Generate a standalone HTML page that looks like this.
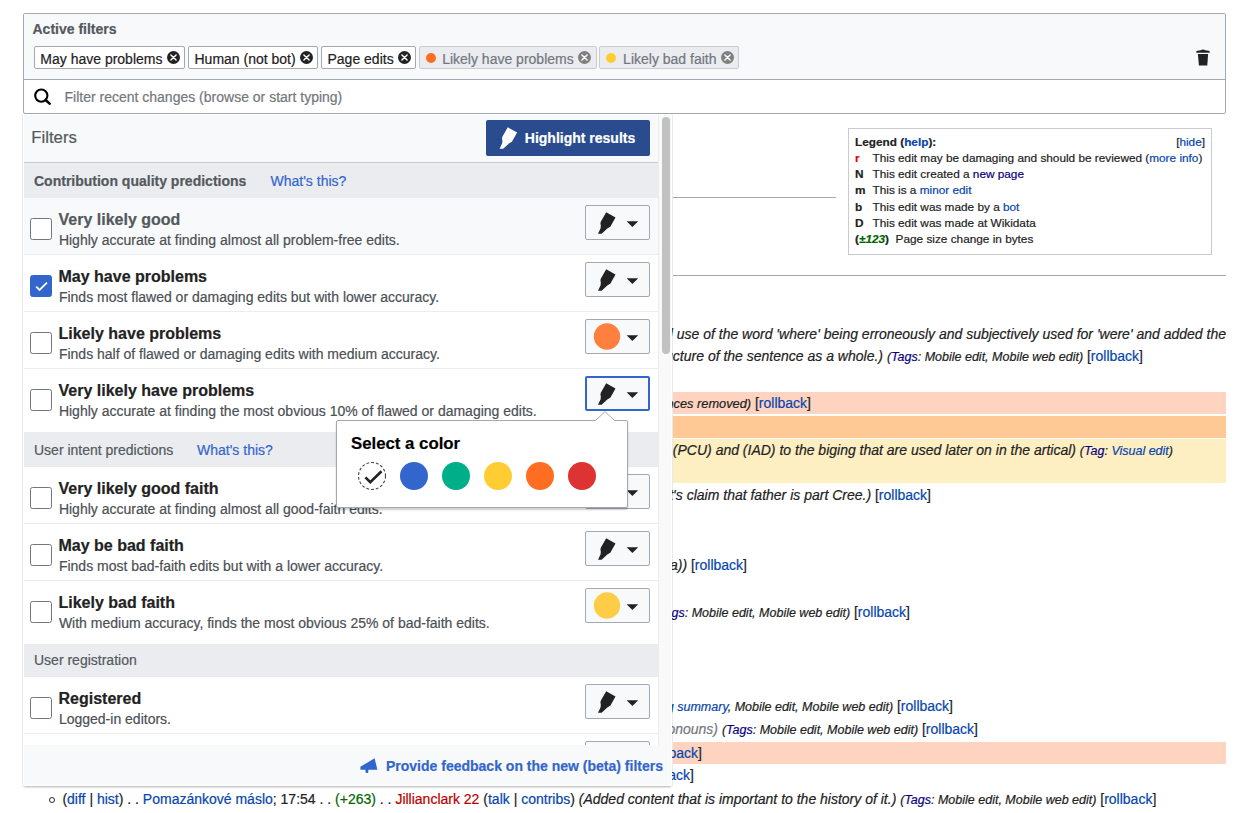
<!DOCTYPE html>
<html><head><meta charset="utf-8">
<style>
*{box-sizing:border-box;margin:0;padding:0}
html,body{width:1250px;height:813px;overflow:hidden;background:#fff}
body{position:relative;font-family:"Liberation Sans",sans-serif;color:#222;font-size:14px;-webkit-text-stroke:0.2px currentColor}
.a{position:absolute;white-space:nowrap;line-height:1}
.lk{color:#0645ad}
.vt{color:#0b0080}
.i{font-style:italic}
.b{font-weight:bold}
.tg{font-size:12.5px}
/* active filters */
#af{position:absolute;left:23px;top:13px;width:1203px;height:101px;border:1px solid #a2a9b1;border-radius:2px;background:#fff}
#afTop{position:absolute;left:0;top:0;right:0;height:66px;background:#f8f9fa;border-bottom:1px solid #a2a9b1}
.chip{position:absolute;top:32px;height:23px;border:1px solid #a2a9b1;border-radius:2px;background:#fff}
.chip.m{background:#eaecf0;border-color:#c8ccd1}
.chip .t{position:absolute;top:5.3px;font-size:14px;line-height:1}
.chip.m .t{color:#72777d}
.chip .x{position:absolute;top:4px;width:13px;height:13px}
.dot{position:absolute;top:6px;width:10px;height:10px;border-radius:50%}
/* panel */
#pn{position:absolute;left:23px;top:114px;width:649px;height:672px;background:#fff;border:1px solid #fff;border-radius:1px;box-shadow:0 2px 2px -1px rgba(0,0,0,0.3),-1px 0 1px 0 rgba(0,0,0,0.07),1px 0 1px 0 rgba(0,0,0,0.07);overflow:hidden}
.sec{position:absolute;left:0;width:634px;background:#eaecf0;color:#54595d}
.row{position:absolute;left:0;width:634px;background:#fff;border-bottom:1px solid #eaecf0}
.cb{position:absolute;left:6px;top:20px;width:22px;height:22px;border:1px solid #72777d;border-radius:2.5px;background:#fff}
.cb.on{background:#36c;border-color:#36c}
.rt{position:absolute;left:34.5px;top:14px;font-size:16px;font-weight:bold;line-height:1;white-space:nowrap}
.rd{position:absolute;left:34.9px;top:35.3px;font-size:14px;line-height:1;color:#4b5055;white-space:nowrap}
.btn{position:absolute;left:561px;top:7px;width:65px;height:35px;border:1px solid #a2a9b1;border-radius:2px;background:#f8f9fa}
.btn svg{position:absolute;left:-1px;top:-1px}
.csw{position:absolute;left:8px;top:3px;width:26px;height:27px;border-radius:50%}
</style></head>
<body>

<!-- ===== background page content ===== -->
<div id="bg">
  <div style="position:absolute;left:673px;top:197px;width:163px;height:1px;background:#a2a9b1"></div>
  <div style="position:absolute;left:673px;top:275px;width:553px;height:1px;background:#a2a9b1"></div>

  <!-- legend -->
  <div style="position:absolute;left:848px;top:128px;width:364px;height:127px;border:1px solid #c8ccd1;background:#fff;font-size:11.8px">
    <div class="a b" style="left:6px;top:7.5px">Legend (<span class="lk">help</span>):</div>
    <div class="a" style="right:6px;top:7.5px">[<span class="lk">hide</span>]</div>
    <div class="a b" style="left:6px;top:23.5px;color:#e00">r</div>
    <div class="a" style="left:23.5px;top:23.5px">This edit may be damaging and should be reviewed (<span class="lk">more info</span>)</div>
    <div class="a b" style="left:6px;top:39.5px">N</div>
    <div class="a" style="left:23.5px;top:39.5px">This edit created a <span style="color:#0b0080">new page</span></div>
    <div class="a b" style="left:6px;top:56px">m</div>
    <div class="a" style="left:23.5px;top:56px">This is a <span class="lk">minor edit</span></div>
    <div class="a b" style="left:6px;top:72.5px">b</div>
    <div class="a" style="left:23.5px;top:72.5px">This edit was made by a <span class="lk">bot</span></div>
    <div class="a b" style="left:6px;top:88.5px">D</div>
    <div class="a" style="left:23.5px;top:88.5px">This edit was made at Wikidata</div>
    <div class="a" style="left:6px;top:105px"><b>(</b><b class="i" style="color:#006400">±123</b><b>)</b>&nbsp; Page size change in bytes</div>
  </div>

  <!-- highlight bars -->
  <div style="position:absolute;left:673px;top:392px;width:553px;height:22px;background:#fed3c0"></div>
  <div style="position:absolute;left:673px;top:416px;width:553px;height:22px;background:#fec994"></div>
  <div style="position:absolute;left:673px;top:439px;width:553px;height:44px;background:#feefc3"></div>
  <div style="position:absolute;left:673px;top:742px;width:553px;height:22px;background:#fed3c0"></div>

  <!-- text lines (right aligned to measured ends) -->
  <div class="a i" style="right:24px;top:326.7px">changed the wording to avoid use of the word 'where' being erroneously and subjectively used for 'were' and added the</div>
  <div class="a" style="right:107px;top:348.7px"><span class="i">structure of the sentence as a whole.)</span> <span class="i tg">(<span class="vt">Tags</span>: Mobile edit, Mobile web edit)</span> [<span class="lk">rollback</span>]</div>
  <div class="a" style="right:439px;top:395.5px"><span class="i" style="font-size:12.8px">sources and references removed)</span> [<span class="lk">rollback</span>]</div>
  <div class="a" style="right:77px;top:442.6px"><span class="i">added the abbreviations (PCU) and (IAD) to the biging that are used later on in the artical)</span> <span class="i tg">(<span class="vt">Tag</span>: <span class="lk">Visual edit</span>)</span></div>
  <div class="a" style="right:319px;top:487.5px"><span class="i">removed the subject's claim that father is part Cree.)</span> [<span class="lk">rollback</span>]</div>
  <div class="a" style="right:503px;top:558px"><span class="i">(Wikidata))</span> [<span class="lk">rollback</span>]</div>
  <div class="a" style="right:340px;top:604.8px"><span class="i tg">(<span class="vt">Tags</span>: Mobile edit, Mobile web edit)</span> [<span class="lk">rollback</span>]</div>
  <div class="a" style="right:297px;top:698.6px"><span class="i tg">(Tags: <span class="lk">Blanking summary</span>, Mobile edit, Mobile web edit)</span> [<span class="lk">rollback</span>]</div>
  <div class="a" style="right:272px;top:721.6px"><span class="i" style="color:#72777d">pronouns)</span> <span class="i tg">(<span class="vt">Tags</span>: Mobile edit, Mobile web edit)</span> [<span class="lk">rollback</span>]</div>
  <div class="a" style="right:548px;top:745.9px">[<span class="lk">rollback</span>]</div>
  <div class="a" style="right:556px;top:768.1px">[<span class="lk">rollback</span>]</div>

  <div class="a" style="left:48.8px;top:796.8px;width:5.8px;height:5.8px;border:1px solid #222;border-radius:50%"></div>
  <div class="a" style="left:62.4px;top:792px">(<span class="lk">diff</span> | <span class="lk">hist</span>) . . <span class="lk">Pomazánkové máslo</span>; 17:54 . . <span style="color:#006400">(+263)</span> . . <span style="color:#ba0000">Jillianclark 22</span> (<span class="lk">talk</span> | <span class="lk">contribs</span>) <span class="i">(Added content that is important to the history of it.)</span> <span class="i tg">(<span class="vt">Tags</span>: Mobile edit, Mobile web edit)</span> [<span class="lk">rollback</span>]</div>
</div>

<!-- ===== active filters ===== -->
<div id="af">
  <div id="afTop">
    <div class="a b" style="left:8.5px;top:8px;color:#54595d">Active filters</div>
    <div class="chip" style="left:10.0px;width:151.0px"><span class="t" style="left:5.3px">May have problems</span><svg class="x" style="left:132.3px" viewBox="0 0 13 13" width="13" height="13"><circle cx="6.5" cy="6.5" r="6.5" fill="#222"/><path d="M3.9 3.9 L9.1 9.1 M9.1 3.9 L3.9 9.1" stroke="#fff" stroke-width="1.4" stroke-linecap="round"/></svg></div>
    <div class="chip" style="left:164px;width:130px"><span class="t" style="left:5.5px">Human (not bot)</span><svg class="x" style="left:111.3px" viewBox="0 0 13 13" width="13" height="13"><circle cx="6.5" cy="6.5" r="6.5" fill="#222"/><path d="M3.9 3.9 L9.1 9.1 M9.1 3.9 L3.9 9.1" stroke="#fff" stroke-width="1.4" stroke-linecap="round"/></svg></div>
    <div class="chip" style="left:297px;width:95px"><span class="t" style="left:5.5px">Page edits</span><svg class="x" style="left:75.5px" viewBox="0 0 13 13" width="13" height="13"><circle cx="6.5" cy="6.5" r="6.5" fill="#222"/><path d="M3.9 3.9 L9.1 9.1 M9.1 3.9 L3.9 9.1" stroke="#fff" stroke-width="1.4" stroke-linecap="round"/></svg></div>
    <div class="chip m" style="left:395px;width:178px"><span class="dot" style="left:6px;background:#ff6d22"></span><span class="t" style="left:22.2px">Likely have problems</span><svg class="x" style="left:158px" viewBox="0 0 13 13" width="13" height="13"><circle cx="6.5" cy="6.5" r="6.5" fill="#808080"/><path d="M3.9 3.9 L9.1 9.1 M9.1 3.9 L3.9 9.1" stroke="#fff" stroke-width="1.4" stroke-linecap="round"/></svg></div>
    <div class="chip m" style="left:575px;width:140px"><span class="dot" style="left:6px;background:#fc3"></span><span class="t" style="left:23.1px">Likely bad faith</span><svg class="x" style="left:121px" viewBox="0 0 13 13" width="13" height="13"><circle cx="6.5" cy="6.5" r="6.5" fill="#808080"/><path d="M3.9 3.9 L9.1 9.1 M9.1 3.9 L3.9 9.1" stroke="#fff" stroke-width="1.4" stroke-linecap="round"/></svg></div>
    <svg style="position:absolute;left:1171px;top:34px" width="18" height="20" viewBox="0 0 18 20"><path d="M1.3 4.8 L14.7 4.8 L14.7 3.7 Q14.5 2.8 13.5 2.7 L10.4 2.3 Q8 0.9 5.7 2.3 L2.5 2.7 Q1.5 2.8 1.3 3.7 Z" fill="#222"/><path d="M2.9 6.1 L13.1 6.1 L12.3 17.5 L3.9 17.5 Z" fill="#222"/></svg>
  </div>
  <svg style="position:absolute;left:9px;top:72.5px" width="20" height="20" viewBox="0 0 20 20"><circle cx="8.3" cy="8.6" r="6.1" fill="none" stroke="#000" stroke-width="2.1"/><path d="M12.6 13 L16.6 16.6" stroke="#000" stroke-width="2.6" stroke-linecap="round"/></svg>
  <div class="a" style="left:40.5px;top:76px;color:#72777d">Filter recent changes (browse or start typing)</div>
</div>

<!-- ===== panel ===== -->
<div id="pn">
<div style="position:absolute;left:0;top:0;width:648px;height:48px;background:#f8f9fa;border-bottom:1px solid #c8ccd1"></div>
<div class="a" style="left:7.2px;top:14.8px;font-size:16.8px;color:#54595d">Filters</div>
<div style="position:absolute;left:462px;top:5px;width:164px;height:36px;background:#2a4b8d;border-radius:2px"><svg style="position:absolute;left:0;top:0" width="40" height="36" viewBox="0 0 40 36"><path d="M21.2 7.3 L30.5 12.6 L25.3 21.8 L22.6 23.3 L16.6 28.7 L13 28.7 L15.6 23.2 L15.8 20.4 L15.4 18.2 L15.9 16.4 Z" fill="#fff" transform="translate(0.6,0)"/></svg><div class="a b" style="left:38.8px;top:10.9px;color:#fff">Highlight results</div></div>
<div class="sec" style="top:48px;height:35px"><div class="a" style="left:10px;top:10.7px;font-weight:bold">Contribution quality predictions</div><div class="a" style="left:246.5px;top:10.7px;color:#36c">What's this?</div></div>
<div class="sec" style="top:317px;height:35px"><div class="a" style="left:10px;top:10.7px;font-weight:normal">User intent predictions</div><div class="a" style="left:173px;top:10.7px;color:#36c">What's this?</div></div>
<div class="sec" style="top:529px;height:33px"><div class="a" style="left:10px;top:8.7px;font-weight:normal">User registration</div></div>
<div class="row" style="top:83px;height:57px;background:#f8f9fa;border-bottom:1px solid #eaecf0"><div class="cb"></div><div class="rt" style="color:#54595d">Very likely good</div><div class="rd">Highly accurate at finding almost all problem-free edits.</div></div>
<div class="btn" style="top:90px"><svg width="65" height="35" viewBox="0 0 65 35"><path d="M21.2 7.3 L30.5 12.6 L25.3 21.8 L22.6 23.3 L16.6 28.7 L13 28.7 L15.6 23.2 L15.8 20.4 L15.4 18.2 L15.9 16.4 Z" fill="#222"/><path d="M41.6 16.2 L53.2 16.2 L47.4 22.1 Z" fill="#222"/></svg></div>
<div class="row" style="top:140px;height:57px;background:#fff;border-bottom:1px solid #eaecf0"><div class="cb on"><svg width="20" height="20" viewBox="0 0 20 20" style="position:absolute;left:0;top:0"><path d="M5.2 10.7 L8.5 14 L16 6.6" fill="none" stroke="#fff" stroke-width="1.8"/></svg></div><div class="rt" style="color:#222">May have problems</div><div class="rd">Finds most flawed or damaging edits but with lower accuracy.</div></div>
<div class="btn" style="top:147px"><svg width="65" height="35" viewBox="0 0 65 35"><path d="M21.2 7.3 L30.5 12.6 L25.3 21.8 L22.6 23.3 L16.6 28.7 L13 28.7 L15.6 23.2 L15.8 20.4 L15.4 18.2 L15.9 16.4 Z" fill="#222"/><path d="M41.6 16.2 L53.2 16.2 L47.4 22.1 Z" fill="#222"/></svg></div>
<div class="row" style="top:197px;height:57px;background:#fff;border-bottom:1px solid #eaecf0"><div class="cb"></div><div class="rt" style="color:#222">Likely have problems</div><div class="rd">Finds half of flawed or damaging edits with medium accuracy.</div></div>
<div class="btn" style="top:204px"><svg width="65" height="35" viewBox="0 0 65 35"><circle cx="22" cy="17.5" r="13.2" fill="#ff7f3f"/><path d="M41.6 16.2 L53.2 16.2 L47.4 22.1 Z" fill="#222"/></svg></div>
<div class="row" style="top:254px;height:63px;background:#fff;border-bottom:0"><div class="cb"></div><div class="rt" style="color:#222">Very likely have problems</div><div class="rd">Highly accurate at finding the most obvious 10% of flawed or damaging edits.</div></div>
<div class="btn" style="top:261px;border:2px solid #36c"><svg style="left:-2px;top:-2px" width="65" height="35" viewBox="0 0 65 35"><path d="M21.2 7.3 L30.5 12.6 L25.3 21.8 L22.6 23.3 L16.6 28.7 L13 28.7 L15.6 23.2 L15.8 20.4 L15.4 18.2 L15.9 16.4 Z" fill="#222"/><path d="M41.6 16.2 L53.2 16.2 L47.4 22.1 Z" fill="#222"/></svg></div>
<div class="row" style="top:352px;height:57px;background:#fff;border-bottom:1px solid #eaecf0"><div class="cb"></div><div class="rt" style="color:#222">Very likely good faith</div><div class="rd">Highly accurate at finding almost all good-faith edits.</div></div>
<div class="btn" style="top:359px"><svg width="65" height="35" viewBox="0 0 65 35"><path d="M21.2 7.3 L30.5 12.6 L25.3 21.8 L22.6 23.3 L16.6 28.7 L13 28.7 L15.6 23.2 L15.8 20.4 L15.4 18.2 L15.9 16.4 Z" fill="#222"/><path d="M41.6 16.2 L53.2 16.2 L47.4 22.1 Z" fill="#222"/></svg></div>
<div class="row" style="top:409px;height:57px;background:#fff;border-bottom:1px solid #eaecf0"><div class="cb"></div><div class="rt" style="color:#222">May be bad faith</div><div class="rd">Finds most bad-faith edits but with a lower accuracy.</div></div>
<div class="btn" style="top:416px"><svg width="65" height="35" viewBox="0 0 65 35"><path d="M21.2 7.3 L30.5 12.6 L25.3 21.8 L22.6 23.3 L16.6 28.7 L13 28.7 L15.6 23.2 L15.8 20.4 L15.4 18.2 L15.9 16.4 Z" fill="#222"/><path d="M41.6 16.2 L53.2 16.2 L47.4 22.1 Z" fill="#222"/></svg></div>
<div class="row" style="top:466px;height:63px;background:#fff;border-bottom:0"><div class="cb"></div><div class="rt" style="color:#222">Likely bad faith</div><div class="rd">With medium accuracy, finds the most obvious 25% of bad-faith edits.</div></div>
<div class="btn" style="top:473px"><svg width="65" height="35" viewBox="0 0 65 35"><circle cx="22" cy="17.5" r="13.2" fill="#fdcd48"/><path d="M41.6 16.2 L53.2 16.2 L47.4 22.1 Z" fill="#222"/></svg></div>
<div class="row" style="top:562px;height:57px;background:#fff;border-bottom:1px solid #eaecf0"><div class="cb"></div><div class="rt" style="color:#222">Registered</div><div class="rd">Logged-in editors.</div></div>
<div class="btn" style="top:569px"><svg width="65" height="35" viewBox="0 0 65 35"><path d="M21.2 7.3 L30.5 12.6 L25.3 21.8 L22.6 23.3 L16.6 28.7 L13 28.7 L15.6 23.2 L15.8 20.4 L15.4 18.2 L15.9 16.4 Z" fill="#222"/><path d="M41.6 16.2 L53.2 16.2 L47.4 22.1 Z" fill="#222"/></svg></div>
<div class="row" style="top:619px;height:57px;background:#fff;border-bottom:1px solid #eaecf0"><div class="cb"></div><div class="rt" style="color:#222">Unregistered</div><div class="rd">Editors who aren't logged-in.</div></div>
<div class="btn" style="top:626px"><svg width="65" height="35" viewBox="0 0 65 35"><path d="M21.2 7.3 L30.5 12.6 L25.3 21.8 L22.6 23.3 L16.6 28.7 L13 28.7 L15.6 23.2 L15.8 20.4 L15.4 18.2 L15.9 16.4 Z" fill="#222"/><path d="M41.6 16.2 L53.2 16.2 L47.4 22.1 Z" fill="#222"/></svg></div>
<div style="position:absolute;left:634px;top:0;width:14px;height:631px;background:#f9f9f9;border-left:1px solid #ececec"></div>
<div style="position:absolute;left:638px;top:2px;width:8px;height:237px;background:#c1c1c1;border-radius:4px"></div>
<div style="position:absolute;left:0;top:630px;width:649px;height:40px;background:#f8f9fa;border-radius:0 0 2px 2px"><svg style="position:absolute;left:335px;top:11px" width="20" height="18" viewBox="0 0 20 18"><path d="M15.6 2.2 L18.4 13.7 L9.4 13.7 L9.2 16.4 Q7.9 17.8 6.6 16.4 L6.4 13.7 L1.4 13.7 L1.4 10.8 Z" fill="#36c"/></svg><div class="a b" style="left:362px;top:13.7px;color:#36c">Provide feedback on the new (beta) filters</div></div>
</div>


<!-- ===== color popup ===== -->
<div id="pop" style="position:absolute;left:336px;top:420px;width:292px;height:88px;background:#fff;border:1px solid #a2a9b1;border-radius:2px;box-shadow:0 2px 2px 0 rgba(0,0,0,0.2)">
  <div class="a b" style="left:14px;top:14.5px;font-size:16.8px;color:#000">Select a color</div>
  <svg style="position:absolute;left:21px;top:41px" width="28" height="28" viewBox="0 0 28 28"><circle cx="14" cy="14" r="13.5" fill="none" stroke="#444" stroke-width="1.1" stroke-dasharray="2.8 2"/><path d="M7.4 15.3 L12.3 20.2 L23.5 9.2" fill="none" stroke="#222" stroke-width="2.6"/></svg>
  <div style="position:absolute;left:63px;top:41px;width:28px;height:28px;border-radius:50%;background:#36c"></div><div style="position:absolute;left:105px;top:41px;width:28px;height:28px;border-radius:50%;background:#00af89"></div><div style="position:absolute;left:147px;top:41px;width:28px;height:28px;border-radius:50%;background:#fc3"></div><div style="position:absolute;left:189px;top:41px;width:28px;height:28px;border-radius:50%;background:#ff6d22"></div><div style="position:absolute;left:231px;top:41px;width:28px;height:28px;border-radius:50%;background:#d33"></div>
</div>
<svg style="position:absolute;left:594px;top:411px" width="22" height="11" viewBox="0 0 22 11"><path d="M1 10 L11 0.6 L21 10" fill="#fff" stroke="#a2a9b1" stroke-width="1"/><rect x="1.8" y="9.5" width="18.4" height="2" fill="#fff"/></svg>

</body></html>
